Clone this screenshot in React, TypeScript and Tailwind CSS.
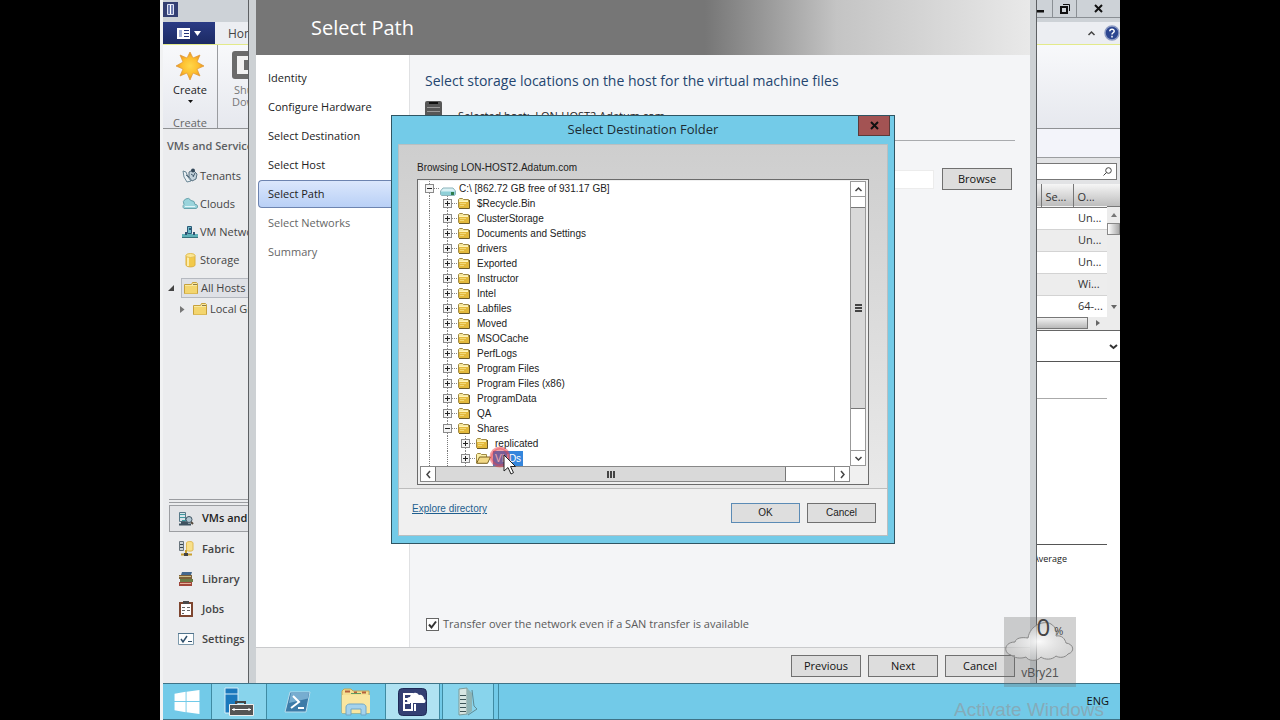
import { FC, ReactNode, useState } from 'react';

const uiFont = "font-['Open_Sans','Noto_Sans',sans-serif]";
const dialogFont = "font-['Liberation_Sans',Arial,sans-serif]";

const steps = [
  'Identity',
  'Configure Hardware',
  'Select Destination',
  'Select Host',
  'Select Path',
  'Select Networks',
  'Summary',
];

const folders = [
  '$Recycle.Bin',
  'ClusterStorage',
  'Documents and Settings',
  'drivers',
  'Exported',
  'Instructor',
  'Intel',
  'Labfiles',
  'Moved',
  'MSOCache',
  'PerfLogs',
  'Program Files',
  'Program Files (x86)',
  'ProgramData',
  'QA',
];

const vmRows = ['Un...', 'Un...', 'Un...', 'Wi...', '64-...'];

/* ---------- icons ---------- */

const FolderIcon: FC = () => (
  <svg width="12" height="12" viewBox="0 0 12 12" className="shrink-0">
    <path d="M.5 9.500v-8l1-1h3l1 1h5v8z" fill="#f7e9a0" stroke="#a18a45" />
    <path d="M1 3.500h10v6.500H1z" fill="#e3b93c" />
    <path d="M1 3.500h9" stroke="#fff3b8" />
    <path d="M2 5.500h6M2 7.500h4" stroke="#f3d878" />
    <path d="M11.500 2v8.500H1" fill="none" stroke="#6b5a28" />
  </svg>
);

const OpenFolderIcon: FC = () => (
  <svg width="15" height="12" viewBox="0 0 15 12" className="shrink-0">
    <path d="M.5 10V1.500l1-1h3l1 1h5V4" fill="#fbf0a8" stroke="#a18a45" />
    <path d="M.7 10.300 3.500 4h11l-3 6.300z" fill="#f3d986" stroke="#7a6220" />
  </svg>
);

const DriveIcon: FC = () => (
  <svg width="16" height="10" viewBox="0 0 16 10" className="shrink-0">
    <path d="M3 1h10l2.500 3v3.500l-1 1h-13l-1-1V4z" fill="#d8f1f5" stroke="#8bb3ba" />
    <path d="M1 4.500h14v3.500H1z" fill="#8fd0d8" />
    <path d="M11 5h3v3h-3z" fill="#2f7d4c" />
  </svg>
);

const BigFolderIcon: FC = () => (
  <svg width="14" height="14" viewBox="0 0 14 14" className="shrink-0">
    <path d="M.5 12.500v-9h7l1-2h4l1 1v10z" fill="#f9e9a0" stroke="#c7a13c" />
    <path d="M1 5h12v7.500H1z" fill="#f3d56e" />
    <path d="M9 3.500h4" stroke="#8a7a4a" />
  </svg>
);

const TenantsIcon: FC = () => (
  <svg width="16" height="16" viewBox="0 0 16 16">
    <path d="M1 3l3 1 2 5 3 4-4 1-3-5z" fill="#e9f0f4" stroke="#6b8796" />
    <path d="M7 4l4-2 4 4-1 5-4 2-3-4z" fill="#c4d3dc" stroke="#587080" />
    <circle cx="11" cy="2.500" r="2" fill="#35495a" />
    <path d="M9 6l3 2M11 9l2-4M4 7l3 2" stroke="#40586a" />
  </svg>
);

const CloudsIcon: FC = () => (
  <svg width="16" height="16" viewBox="0 0 16 16">
    <path d="M2 12.500a2.500 2.500 0 0 1 0-4 4 4 0 0 1 7-4 4 4 0 0 1 4 4 2 2 0 0 1 1 4z" fill="#9ad4dc" stroke="#6aa3ad" />
    <path d="M3 10.500h10" stroke="#e1f5f8" />
  </svg>
);

const NetworkIcon: FC = () => (
  <svg width="16" height="16" viewBox="0 0 16 16">
    <path d="M0 10h16v3H0z" fill="#5eb1b8" />
    <path d="M0 13.500h16" stroke="#35737c" />
    <path d="M5.500 2.500h4v7h-4z" fill="#6fbcc9" stroke="#2b5b78" />
    <path d="M7 4h2v2H7zM3 8h2v3H3zM11 8h2v3h-2z" fill="#2d5372" />
  </svg>
);

const StorageIcon: FC = () => (
  <svg width="16" height="16" viewBox="0 0 16 16">
    <path d="M4 3.500v9.500c0 2.500 9 2.500 9 0V3.500z" fill="#f2c94a" stroke="#dcb040" />
    <path d="M6 5v9" stroke="#fcecab" strokeWidth="2" />
    <ellipse cx="8.500" cy="3.500" rx="4.500" ry="2" fill="#fbe694" stroke="#e3bf55" />
  </svg>
);

const VmsIcon: FC = () => (
  <svg width="16" height="16" viewBox="0 0 16 16">
    <path d="M1.500 1.500h6v9h-6z" fill="#d7e4ea" stroke="#587988" />
    <path d="M2 3.500h5M2 6.500h5M4 9.500h5" stroke="#3f9aa0" />
    <path d="M1 13.500h12M3 11.500h7" stroke="#3f5260" strokeWidth="2" />
    <circle cx="11" cy="8.500" r="3" fill="#b2c6d2" stroke="#3f5564" />
    <path d="M13 11l2 2" stroke="#54493d" strokeWidth="2" />
  </svg>
);

const FabricIcon: FC = () => (
  <svg width="16" height="16" viewBox="0 0 16 16">
    <path d="M1.500 .5h4v9h-4z" fill="#cbd3d8" stroke="#6a757d" />
    <path d="M2 3.500h3M2 6.500h3" stroke="#38454f" />
    <path d="M8.500 2v7c0 1.500 6.500 1.500 6.500 0V2c0-2-6.500-2-6.500 0z" fill="#f8e08a" stroke="#e0ba55" />
    <path d="M8 9v4M3 13.500h11" stroke="#c9a030" strokeWidth="2" />
    <path d="M6 12h4v3H6z" fill="#444" />
  </svg>
);

const LibraryIcon: FC = () => (
  <svg width="16" height="16" viewBox="0 0 16 16">
    <path d="M4 1h10l-1 3H3z" fill="#43678c" />
    <path d="M1 4h13v4H1z" fill="#7c6038" />
    <path d="M1 5.500h12" stroke="#cdbb85" />
    <path d="M2 8h13v3H2z" fill="#6b7c46" />
    <path d="M1 11h13v4H1z" fill="#a1473a" />
    <path d="M2 12.500h11" stroke="#e4b19b" />
  </svg>
);

const JobsIcon: FC = () => (
  <svg width="16" height="16" viewBox="0 0 16 16">
    <path d="M2 2h12v13H2z" fill="#fff" stroke="#7e4630" strokeWidth="2" />
    <path d="M5 0h6v3H5z" fill="#4a4a4a" />
    <path d="M4 6.500h3M9 6.500h3M4 9.500h3M9 9.500h3M4 12.500h2" stroke="#666" />
  </svg>
);

const SettingsIcon: FC = () => (
  <svg width="16" height="16" viewBox="0 0 16 16">
    <path d="M.5 2.500h15v11H.5z" fill="#fdfefe" stroke="#7c99ab" />
    <path d="M0 2.500h16" stroke="#50738c" />
    <path d="M3 8l2 3 4-6" fill="none" stroke="#2f4f6b" strokeWidth="1.500" />
    <path d="M10 10.500h4" stroke="#2f4f6b" />
  </svg>
);

const StarIcon: FC = () => (
  <svg width="30" height="30" viewBox="0 0 30 30" className="mx-auto block">
    <defs>
      <radialGradient id="sun">
        <stop offset="0" stopColor="#ffd84a" />
        <stop offset="0.600" stopColor="#fdbe2e" />
        <stop offset="1" stopColor="#e9901f" />
      </radialGradient>
    </defs>
    <path
      d="M15 1l3 6 7-3-3 7 7 4-7 3 3 7-7-3-3 7-3-7-7 3 3-7-7-3 7-4-3-7 7 3z"
      fill="url(#sun)"
      stroke="#dd9836"
      strokeWidth=".7"
    />
  </svg>
);

const Chevron: FC<{ d: string }> = ({ d }) => (
  <svg width="9" height="9" viewBox="0 0 9 9" className="shrink-0">
    <path d={d} fill="none" stroke="#444" strokeWidth="1.500" />
  </svg>
);

/* ---------- main console behind the wizard ---------- */

const views = [
  { label: 'Tenants', icon: <TenantsIcon /> },
  { label: 'Clouds', icon: <CloudsIcon /> },
  { label: 'VM Networks', icon: <NetworkIcon /> },
  { label: 'Storage', icon: <StorageIcon /> },
];

const workspaces = [
  { label: 'Fabric', icon: <FabricIcon /> },
  { label: 'Library', icon: <LibraryIcon /> },
  { label: 'Jobs', icon: <JobsIcon /> },
  { label: 'Settings', icon: <SettingsIcon /> },
];

const Ribbon: FC = () => (
  <header className="shrink-0">
    <div className="flex h-[22px] items-start justify-between bg-[#cdd2d7]">
      <svg width="15" height="15" viewBox="0 0 15 15" className="mt-0.5">
        <path d="M0 0h15v15H0z" fill="#333f73" />
        <path d="M4.500 2.500h6v10h-6z" fill="#6d7bb0" stroke="#dfe4f4" />
        <path d="M7.500 3v9" stroke="#fff" />
      </svg>
      <div className="flex h-[18px] border-b border-[#8a8f94]">
        <button type="button" aria-label="Minimize" className="flex w-6 items-center justify-center">
          <svg width="8" height="8" viewBox="0 0 8 8"><path d="M0 5h8v2.500H0z" fill="#111" /></svg>
        </button>
        <button type="button" aria-label="Restore" className="flex w-[25px] items-center justify-center border-x border-[#8a8f94]">
          <svg width="10" height="10" viewBox="0 0 10 10">
            <path d="M3 .5h6.500V7" fill="none" stroke="#111" />
            <path d="M1 3h6v6H1z" fill="none" stroke="#111" strokeWidth="2" />
          </svg>
        </button>
        <button type="button" aria-label="Close" className="flex w-[43px] items-center justify-center">
          <svg width="9" height="9" viewBox="0 0 9 9"><path d="M1 1l7 7M8 1L1 8" stroke="#111" strokeWidth="2" /></svg>
        </button>
      </div>
    </div>
    <div className="flex h-[23px] items-center border-b border-[#e3ea8a] bg-[#eceef2]">
      <button type="button" aria-label="File menu" className="flex h-full w-[52px] items-center justify-center gap-1 bg-linear-to-b from-[#2a3b85] to-[#1c2a63]">
        <svg width="13" height="11" viewBox="0 0 13 11">
          <path d="M0 0h13v11H0z" fill="#fff" />
          <path d="M2 2h3v7H2z" fill="#a6b3d9" />
          <path d="M7 2.500h5M7 5.500h5M7 8.500h5" stroke="#26367c" />
        </svg>
        <svg width="7" height="5" viewBox="0 0 7 5"><path d="M0 0h7L3.500 5z" fill="#fff" /></svg>
      </button>
      <button type="button" className="h-full flex-1 pt-0.5 pl-[13px] text-left text-[12px] text-[#444]">Home</button>
      <Chevron d="M1.500 6L4.500 3l3 3" />
      <svg width="16" height="16" viewBox="0 0 16 16" className="ml-2">
        <circle cx="8" cy="8" r="7" fill="#2c4690" stroke="#8e9cc4" strokeWidth="1.500" />
        <path d="M5.800 6.200C5.800 3.500 10.300 3.600 10.200 6.200c0 1.500-2.200 1.600-2.200 3.200M8 10.800v1.600" fill="none" stroke="#fff" strokeWidth="1.500" />
      </svg>
    </div>
    <div className="flex h-[84px] border-b border-[#8f9194] bg-linear-to-b from-[#f8f9fb] to-[#e6e8ee] text-[11px] leading-3">
      <div className="flex w-[55px] flex-col items-center border-r border-[#9a9ca0] pt-1.5 text-[#222]">
        <button type="button" className="flex flex-col items-center">
          <StarIcon />
          <span className="mt-[3px]">Create</span>
          <svg width="5" height="3" viewBox="0 0 5 3" className="mt-1"><path d="M0 0h5L2.500 3z" fill="#111" /></svg>
        </button>
        <span className="mt-3.5 text-[#666]">Create</span>
      </div>
      <button type="button" className="ml-[14px] flex flex-col items-start pt-1.5 text-left text-[#777]">
        <svg width="30" height="28" viewBox="0 0 30 28">
          <rect width="30" height="28" rx="3" fill="#6b6b6b" />
          <path d="M5 5h20v18H5z" fill="#f2f2f2" />
          <path d="M12 9h8v10h-8z" fill="#6b6b6b" />
        </svg>
        <span className="mt-[5px] ml-0.5">Shut</span>
        <span>Down</span>
      </button>
    </div>
  </header>
);

const Navigation: FC = () => (
  <nav className="flex w-60 shrink-0 flex-col bg-[#ebecee] text-[11px] text-[#444]">
    <h2 className="pt-[9px] pl-1 leading-4 font-semibold text-[#5c5f63]">VMs and Services</h2>
    <ul className="pt-2">
      {views.map((view) => (
        <li key={view.label}>
          <a href="#" className="flex h-7 items-center gap-0.5 pl-[19px]">{view.icon}{view.label}</a>
        </li>
      ))}
    </ul>
    <a href="#" className="mt-1 flex items-center gap-[7px] pl-[5px]">
      <svg width="6" height="6" viewBox="0 0 6 6"><path d="M6 0v6H0z" fill="#444" /></svg>
      <span className="flex h-5 flex-1 items-center gap-[3px] border border-[#b5b9c0] bg-[#dfe1e6] pl-0.5"><BigFolderIcon />All Hosts</span>
    </a>
    <a href="#" className="flex h-[22px] items-center gap-2 pl-[17px]">
      <svg width="5" height="7" viewBox="0 0 5 7"><path d="M0 0l4.500 3.500L0 7z" fill="#777" /></svg>
      <span className="flex items-center gap-[3px]"><BigFolderIcon />Local Group</span>
    </a>
    <div className="mt-auto ml-1.5 h-1 border-y border-[#9a9ca0]" />
    <div className="pt-0.5 pb-[31px] pl-1.5 font-semibold">
      <a href="#" className="flex h-[27px] items-center gap-2 border border-[#9c9ea2] bg-[#e3e4e7] pl-2 text-[#222]"><VmsIcon />VMs and Services</a>
      {workspaces.map((space) => (
        <a key={space.label} href="#" className="flex h-[30px] items-center gap-2 pt-1 pl-[9px]">{space.icon}{space.label}</a>
      ))}
    </div>
  </nav>
);

const MachineList: FC = () => (
  <main className="flex min-w-0 flex-1 flex-col bg-white text-[11px] text-[#333]">
    <div className="h-[29px] border-b border-[#9b9da0] bg-[#f3f4fa]" />
    <div className="flex h-[26px] items-center bg-[#e2e3e5] pr-[3px]">
      <label className="flex h-[17px] flex-1 items-center border border-[#777] bg-white pr-1">
        <input type="text" aria-label="Search" className="min-w-0 flex-1 outline-none" />
        <svg width="9" height="9" viewBox="0 0 9 9">
          <circle cx="5.500" cy="3.500" r="2.800" fill="none" stroke="#444" />
          <path d="M3.500 5.500L.5 8.500" stroke="#444" />
        </svg>
      </label>
    </div>
    <div className="flex">
      <table className="flex-1 border-collapse text-left">
        <thead>
          <tr className="h-[23px] border-b border-[#777] bg-linear-to-b from-[#f6f6f6] to-[#bdbdbd]">
            <th aria-label="Name" />
            <th className="w-8 border-l border-[#777] pt-1 pl-1 leading-4 font-normal">Se...</th>
            <th className="w-[34px] border-l border-[#777] pt-1 pl-1 leading-4 font-normal">O...</th>
          </tr>
        </thead>
        <tbody>
          {vmRows.map((os, i) => (
            <tr key={i} className="h-[22px] border-b border-[#d3d3d3] odd:bg-white even:bg-[#ededed] last:border-b-0">
              <td />
              <td />
              <td className="pl-[5px] leading-4 whitespace-nowrap">{os}</td>
            </tr>
          ))}
        </tbody>
      </table>
      <div className="flex w-[13px] flex-col items-center bg-[#ececec]">
        <div className="h-[23px] w-full border-b border-[#777] bg-linear-to-b from-[#f6f6f6] to-[#bdbdbd]" />
        <svg width="6" height="4" viewBox="0 0 6 4" className="my-1.5"><path d="M3 0l3 4H0z" fill="#777" /></svg>
        <div className="h-3 w-full border border-[#888] bg-linear-to-r from-white to-[#aaa]" />
        <svg width="6" height="4" viewBox="0 0 6 4" className="mt-auto mb-2"><path d="M0 0h6L3 4z" fill="#666" /></svg>
      </div>
    </div>
    <div className="flex h-3.5 items-start border-b border-[#666] bg-[#ececec] pr-5">
      <div className="h-3 flex-1 border border-[#777] bg-linear-to-b from-[#f2f2f2] to-[#b9b9b9]" />
      <svg width="4" height="6" viewBox="0 0 4 6" className="mt-[3px] ml-2"><path d="M0 0l4 3-4 3z" fill="#666" /></svg>
    </div>
    <div className="flex h-[31px] items-center justify-end border-b border-[#555] pr-0.5">
      <svg width="9" height="9" viewBox="0 0 9 9"><path d="M1 3l3.500 3L8 3" fill="none" stroke="#333" strokeWidth="2" /></svg>
    </div>
    <div className="flex flex-1 flex-col pr-[13px]">
      <div className="h-[37px] border-b border-[#aaa]" />
      <div className="h-[146px] border-b border-[#555]" />
      <div className="pt-2 pr-10 text-right text-[9px] leading-3 text-[#222]">Average</div>
    </div>
  </main>
);

/* ---------- wizard window ---------- */

const PushButton: FC<{ children: ReactNode }> = ({ children }) => (
  <button type="button" className="h-[22px] w-[70px] border border-[#707070] bg-[#dddddd] text-[11px] leading-4 text-[#111]">
    {children}
  </button>
);

const Wizard: FC = () => {
  const [transfer, setTransfer] = useState(true);
  const [path, setPath] = useState('');

  return (
    <section aria-label="Select Path" className="absolute top-0 right-[83px] bottom-[37px] left-[88px] flex flex-col border-x border-[#5d6063] bg-[#cdd1d4] pr-1.5 pl-[7px]">
      <header className="flex h-[55px] shrink-0 items-center bg-linear-to-r from-[#767676] from-58% via-[#c4c4c4] via-75% to-[#e9e9e9] pl-[55px]">
        <h1 className="text-[20px] text-white">Select Path</h1>
      </header>
      <div className="flex min-h-0 flex-1 bg-[#f4f5f7]">
        <ol className="w-[154px] shrink-0 border-r border-[#e0e1e3] bg-white pt-[9px] pl-0.5 text-[11px] text-[#222]">
          {steps.map((step, i) => (
            <li key={step} className={i > 4 ? 'mb-px text-[#666]' : 'mb-px'}>
              <a
                href="#"
                className={
                  i === 4
                    ? 'flex h-7 items-center rounded-l-sm border border-r-0 border-[#6d84b0] bg-linear-to-b from-[#dbe7fc] to-[#b9d0f6] pl-[9px]'
                    : 'flex h-7 items-center pl-2.5'
                }
              >
                {step}
              </a>
            </li>
          ))}
        </ol>
        <div className="flex min-w-0 flex-1 flex-col px-[15px]">
          <h2 className="pt-4 text-[14px] leading-5 text-[#24456f]">
            Select storage locations on the host for the virtual machine files
          </h2>
          <div className="mt-2.5 flex h-10 items-start gap-4 border-b border-[#a9abae] text-[11px]">
            <svg width="17" height="26" viewBox="0 0 17 26">
              <rect width="17" height="26" rx="2" fill="#575757" />
              <path d="M4 1h9v2H4z" fill="#111" />
              <path d="M2 6.500h13M2 10.500h13" stroke="#9a9a9a" />
            </svg>
            <p className="pt-[7px] leading-4 text-[#222]">Selected host:&nbsp; LON-HOST2.Adatum.com</p>
          </div>
          <div className="mt-[27px] flex items-center gap-2 pr-[3px]">
            <input
              type="text"
              aria-label="Storage location"
              value={path}
              onChange={(e) => setPath(e.target.value)}
              className="h-[19px] min-w-0 flex-1 border border-[#ececec] bg-white"
            />
            <PushButton>Browse</PushButton>
          </div>
          <label className="mt-auto mb-[15px] flex items-center gap-1 pl-px text-[11px] leading-4 text-[#5a5a5a]">
            <span className="relative flex size-[13px]">
              <input
                type="checkbox"
                checked={transfer}
                onChange={(e) => setTransfer(e.target.checked)}
                className="size-[13px] appearance-none border border-[#666] bg-white"
              />
              {transfer && (
                <svg width="13" height="13" viewBox="0 0 13 13" className="pointer-events-none absolute inset-0">
                  <path d="M3 6.500l2.500 3L10 3.500" fill="none" stroke="#333" strokeWidth="2" />
                </svg>
              )}
            </span>
            Transfer over the network even if a SAN transfer is available
          </label>
        </div>
      </div>
      <footer className="flex h-9 shrink-0 items-center justify-end gap-[7px] border-t border-[#c9cacc] bg-[#ededed] pr-[15px]">
        <PushButton>Previous</PushButton>
        <PushButton>Next</PushButton>
        <PushButton>Cancel</PushButton>
      </footer>
    </section>
  );
};

/* ---------- folder dialog ---------- */

const Expander: FC<{ open?: boolean }> = ({ open }) => (
  <svg width="15" height="15" viewBox="0 0 15 15" className="shrink-0">
    <path d="M4.500 0v3M4.500 12v3M9 7.500h6" stroke="#888" strokeDasharray="1 1" />
    <rect x=".5" y="3.500" width="8" height="8" fill="#f4f4f4" stroke="#8a8a8a" />
    <path d={open ? 'M2 7.500h5' : 'M2 7.500h5M4.500 5v5'} stroke="#222" />
  </svg>
);

const guide = 'w-[18px] shrink-0 border-l border-dotted border-[#777]';

const TreeRow: FC<{ name: string; level: number; open?: boolean; selected?: boolean }> = ({ name, level, open, selected }) => (
  <li className="flex h-[15px] pl-[9px]">
    <span className={guide} />
    {level > 1 && <span className={guide} />}
    <button type="button" className="-ml-1 flex items-center">
      <Expander open={open} />
      <span className="flex w-[17px]">{selected ? <OpenFolderIcon /> : <FolderIcon />}</span>
      <span className={selected ? 'bg-[#3486dc] px-0.5 leading-[15px] text-white' : 'px-0.5 leading-[15px]'}>{name}</span>
    </button>
  </li>
);

const DialogButton: FC<{ children: ReactNode; primary?: boolean }> = ({ children, primary }) => (
  <button
    type="button"
    className={
      primary
        ? 'h-5 w-[69px] border border-[#5b8bb5] bg-[#dedede] leading-4'
        : 'h-5 w-[69px] border border-[#707070] bg-[#dedede] leading-4'
    }
  >
    {children}
  </button>
);

const FolderDialog: FC = () => (
  <div
    role="dialog"
    aria-label="Select Destination Folder"
    className={`absolute top-[115px] left-[231px] w-[504px] border border-[#2f5563] bg-[#73cbe8] px-1.5 pb-[7px] text-[10px] text-[#222] ${dialogFont}`}
  >
    <header className="relative flex h-7 items-center justify-center text-[#1c2c33]">
      <h2 className="font-['Open_Sans','Noto_Sans',sans-serif] text-[13px]">Select Destination Folder</h2>
      <button type="button" aria-label="Close" className="absolute top-0 -right-0.5 flex h-5 w-8 items-center justify-center border border-t-0 border-[#5b3a3a] bg-[#a35353]">
        <svg width="9" height="9" viewBox="0 0 9 9"><path d="M1 1l7 7M8 1L1 8" stroke="#111" strokeWidth="2" /></svg>
      </button>
    </header>
    <div className="border border-[#b9bfc1] bg-[#f0f0f0]">
      <div className="border-b border-[#bdbdbd] bg-linear-to-b from-[#cecece] to-[#e9e9e9] px-[18px] pt-[15px] pb-[3px]">
        <p className="leading-4">Browsing LON-HOST2.Adatum.com</p>
        <div className="mt-[3px] border border-[#6b6b6b] bg-[#f0f0f0] px-0.5 pt-px pb-0.5">
          <div className="flex bg-white">
            <ul className="min-w-0 flex-1">
              <li className="flex h-[15px] items-center pl-[5px]">
                <Expander open />
                <span className="flex w-[19px] pt-1.5"><DriveIcon /></span>
                <span className="leading-[15px]">C:\ [862.72 GB free of 931.17 GB]</span>
              </li>
              {folders.map((name) => (
                <TreeRow key={name} name={name} level={1} />
              ))}
              <TreeRow name="Shares" level={1} open />
              <TreeRow name="replicated" level={2} />
              <TreeRow name="VHDs" level={2} selected />
            </ul>
            <div className="flex w-4 flex-col border border-[#999] bg-white">
              <button type="button" aria-label="Scroll up" className="flex h-[15px] items-center justify-center border-b border-[#999]"><Chevron d="M1.500 6L4.500 3l3 3" /></button>
              <div className="mt-2.5 flex h-[202px] flex-col items-center justify-center gap-px border-y border-[#777] bg-[#d9d9d9]">
                <span className="h-0.5 w-[7px] bg-[#444]" />
                <span className="h-0.5 w-[7px] bg-[#444]" />
                <span className="h-0.5 w-[7px] bg-[#444]" />
              </div>
              <button type="button" aria-label="Scroll down" className="mt-auto flex h-[15px] items-center justify-center border-t border-[#999]"><Chevron d="M1.500 3l3 3 3-3" /></button>
            </div>
          </div>
          <div className="flex h-4 pr-4">
            <div className="flex flex-1 border border-[#888] bg-white">
              <button type="button" aria-label="Scroll left" className="flex w-[14px] items-center justify-center"><Chevron d="M6 1L3 4.500l3 3.500" /></button>
              <div className="flex w-[351px] items-center justify-center gap-px border-x border-[#777] bg-[#d9d9d9]">
                <span className="h-[7px] w-0.5 bg-[#444]" />
                <span className="h-[7px] w-0.5 bg-[#444]" />
                <span className="h-[7px] w-0.5 bg-[#444]" />
              </div>
              <button type="button" aria-label="Scroll right" className="ml-auto flex w-[15px] items-center justify-center border-l border-[#888]"><Chevron d="M3 1l3 3.500L3 8" /></button>
            </div>
          </div>
        </div>
      </div>
      <footer className="flex items-start gap-[7px] pt-3.5 pr-[11px] pb-3 pl-[13px]">
        <a href="#" className="mr-auto leading-3 text-[#1f5f8f] underline">Explore directory</a>
        <DialogButton primary>OK</DialogButton>
        <DialogButton>Cancel</DialogButton>
      </footer>
    </div>
  </div>
);

/* pointer with its click highlight */
const Pointer: FC = () => (
  <svg width="32" height="36" viewBox="0 0 32 36" className="pointer-events-none absolute top-[443px] left-[328px]">
    <circle cx="12" cy="14" r="9" fill="#e0232f" fillOpacity=".4" stroke="#e8404a" strokeOpacity=".5" strokeWidth="3" />
    <path d="M16 12v16l4-3.500 3 6.500 2.500-1.300-3-6.200h5z" fill="#fff" stroke="#222" />
  </svg>
);

/* ---------- desktop ---------- */

const Taskbar: FC = () => (
  <footer className="flex h-[37px] shrink-0 items-stretch border-y border-[#3f7387] bg-[#72cae8]">
    <button type="button" aria-label="Start" className="flex w-[49px] items-center justify-center border-r border-[#3f8ba3]">
      <svg width="26" height="24" viewBox="0 0 27 26">
        <path d="M0 4l12-2v10H0zM13 2l14-2v12H13zM0 13h12v11L0 22zM13 13h14v13l-14-2z" fill="#fff" />
      </svg>
    </button>
    <button type="button" aria-label="Server Manager" className="flex w-[55px] items-center justify-center border-r border-[#3f8ba3] bg-[#88d4ec]">
      <svg width="30" height="30" viewBox="0 0 30 30">
        <path d="M1 1h13v25H1z" fill="#1b79bd" stroke="#d8eef8" />
        <path d="M1 7h13" stroke="#d8eef8" />
        <path d="M12 17v-2h9v2" fill="none" stroke="#444" strokeWidth="2" />
        <path d="M5.500 17.500h24v11h-24z" fill="#555" stroke="#eee" />
        <path d="M8 22.500h19M10 21v3M25 21v3" stroke="#fff" />
      </svg>
    </button>
    <button type="button" aria-label="PowerShell" className="flex w-[60px] items-center justify-center">
      <svg width="27" height="22" viewBox="0 0 27 22">
        <path d="M6 1h20l-4 20H1z" fill="#3c7ba8" stroke="#b9dcec" />
        <path d="M7 1.500h18l-1 6L5 12z" fill="#77add0" />
        <path d="M9 5l6 6-8 6M14 17h6" fill="none" stroke="#fff" strokeWidth="2" />
      </svg>
    </button>
    <button type="button" aria-label="File Explorer" className="flex w-[58px] items-center justify-center">
      <svg width="30" height="28" viewBox="0 0 30 28">
        <path d="M1 3l2-2h7l2 2h16v22H1z" fill="#f4df92" stroke="#c6a753" />
        <path d="M4 3.500h5M13 4.500h3M21 4.500h4" stroke="#b4613b" strokeWidth="2" />
        <path d="M10 5.500h10" stroke="#5f9a63" />
        <path d="M1 7h28v18H1z" fill="#f9e6a0" />
        <path d="M5 27v-8c0-2 2-3 4-3h12c2 0 4 1 4 3v8h-5v-6H10v6z" fill="#a4d2ec" stroke="#6ea7c8" />
      </svg>
    </button>
    <button type="button" aria-label="Virtual Machine Manager" className="flex w-[55px] items-center justify-center border-x border-[#3f8ba3] bg-[#b0e2f2]">
      <svg width="29" height="28" viewBox="0 0 29 28">
        <rect x=".5" y=".5" width="28" height="27" rx="4" fill="#333f73" stroke="#1f2a57" />
        <path d="M6 6h8v16H6zM17 16v7M6 11h6M6 15h6" fill="none" stroke="#fff" strokeWidth="2" />
        <path d="M12 15a3 3 0 0 1 0-6 5 5 0 0 1 9-2 4 4 0 0 1 5 4 2 2 0 0 1-1 4z" fill="#fff" />
      </svg>
    </button>
    <button type="button" aria-label="Server" className="ml-0.5 flex w-[52px] items-center justify-center border-x border-[#3f8ba3] bg-[#88d4ec]">
      <svg width="20" height="30" viewBox="0 0 20 30">
        <path d="M1 2l8-1v26l-8 1z" fill="#d7e6e2" stroke="#7d9a98" />
        <path d="M9 1l5 5v18l-5 4z" fill="#8fb4b4" />
        <path d="M14 3l2 16 3 3-9 6" fill="none" stroke="#5e8a94" />
        <path d="M2 8.500h6M2 12.500h6M2 16.500h6M2 20.500h6M2 24.500h6" stroke="#3d5557" />
      </svg>
    </button>
    <div className="ml-1 border-l border-[#3f8ba3]" />
    <span className="ml-auto self-center pr-[11px] text-[11px] text-[#111]">ENG</span>
  </footer>
);

const CpuGadget: FC = () => (
  <div className="absolute top-[617px] right-11 h-[70px] w-[72px] bg-[#6b6b6b]/30">
    <svg width="72" height="70" viewBox="0 0 72 70" className="absolute inset-0">
      <defs>
        <radialGradient id="cloud">
          <stop offset="0" stopColor="#fff" stopOpacity=".9" />
          <stop offset="1" stopColor="#ddd" stopOpacity=".4" />
        </radialGradient>
      </defs>
      <path
        d="M7 38c-8-2-7-13 4-13 1-4 6-5 13-4C26 8 40 3 47 7c5 3 6 8 5 12 6-1 9 3 10 7 8 1 9 9 2 11-3 4-9 4-12 2-4 4-11 4-15 1-4 5-13 4-15 0-5 2-12 1-15-2z"
        fill="url(#cloud)"
        stroke="#888"
      />
    </svg>
    <div className="relative flex h-full flex-col items-center justify-between">
      <p className="flex items-end gap-1 pl-5 text-[#444]">
        <span className="text-[24px] leading-5">0</span>
        <span className="text-[11px] leading-3">%</span>
      </p>
      <p className={`pb-1.5 text-[12px] leading-4 text-[#555] ${dialogFont}`}>vBry21</p>
    </div>
  </div>
);

const App: FC = () => (
  <div className={`h-screen bg-black px-40 ${uiFont}`}>
    <div className="relative flex h-full flex-col overflow-hidden bg-[#f1f2f3] pl-[3px]">
      <div className="flex min-h-0 flex-1 flex-col">
        <Ribbon />
        <div className="flex min-h-0 flex-1">
          <Navigation />
          <MachineList />
        </div>
      </div>
      <Taskbar />
      <Wizard />
      <FolderDialog />
      <Pointer />
      <CpuGadget />
      <p className={`absolute right-4 -bottom-0.5 text-[19px] leading-6 text-[#8aa3ad]/80 ${dialogFont}`}>Activate Windows</p>
    </div>
  </div>
);

export default App;
